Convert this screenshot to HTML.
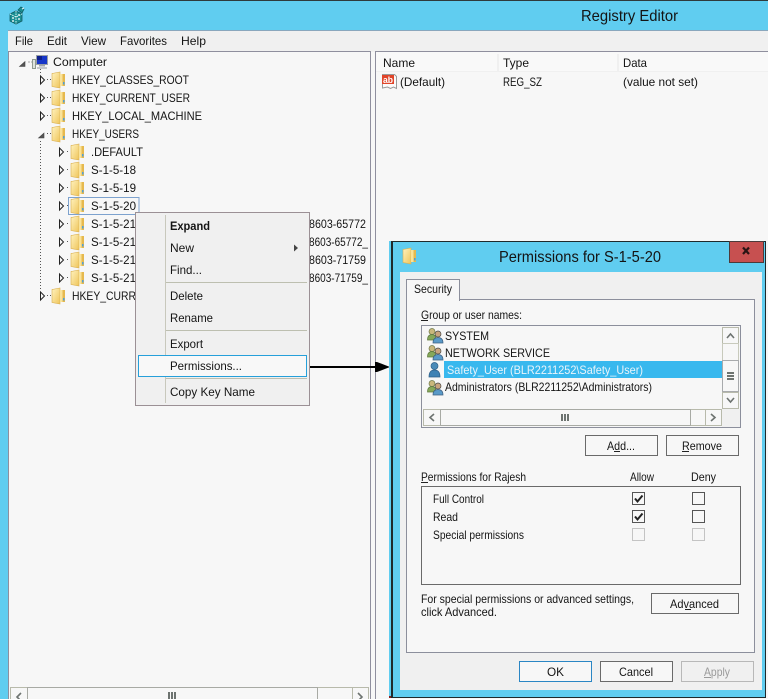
<!DOCTYPE html>
<html><head><meta charset="utf-8"><title>Registry Editor</title>
<style>
html,body{margin:0;padding:0;background:#f7f7f7;overflow:hidden}
svg{display:block}
text{font-family:"Liberation Sans",sans-serif;font-size:12px;fill:#141414}
.c{shape-rendering:crispEdges}
.ar{fill:none;stroke:#6d7370;stroke-width:1.6}
</style></head><body>
<svg width="768" height="699" viewBox="0 0 768 699" xmlns="http://www.w3.org/2000/svg">
<defs>
<linearGradient id="fg" x1="0" y1="0" x2="1" y2="1"><stop offset="0" stop-color="#fff3c0"/><stop offset="1" stop-color="#efc55a"/></linearGradient>
<symbol id="f" width="14" height="16" viewBox="0 0 14 16" overflow="visible">
<path d="M0 1h7l1 1h5v12H0z" fill="#dcae42"/>
<path d="M0 1.500L8 0v16l-8-1.500z" fill="url(#fg)" stroke="#d8ae50" stroke-width=".6"/>
<rect x="8" y="2" width="2.500" height="12" fill="#f9e39a"/>
<rect x="10.500" y="2" width="2.500" height="12" fill="#e6b94e"/>
<rect x="11" y="10" width="1.500" height="2.500" fill="#4f9fd8"/>
</symbol>
<symbol id="u2" width="17" height="16" viewBox="0 0 17 16" overflow="visible">
<circle cx="5" cy="3.500" r="3" fill="#c9b77c" stroke="#6f7a4a" stroke-width=".7"/>
<path d="M0.500 12c0-4 2-5.500 4.500-5.500S9 8 9 12z" fill="#86a85a" stroke="#5e7a3e" stroke-width=".7"/>
<circle cx="11" cy="6" r="3" fill="#c8a47e" stroke="#4a4a48" stroke-width=".7"/>
<path d="M6 15c0-4 2-5.500 5-5.500s5 1.500 5 5.500z" fill="#5a9ac8" stroke="#3e5f80" stroke-width=".7"/>
</symbol>
<symbol id="ex" width="6" height="12" viewBox="0 0 6 12" overflow="visible">
<path d="M1.500 2l4 4-4 4z" fill="#f7f7f7" stroke="#222" stroke-width="1"/>
</symbol>
<symbol id="ck" width="14" height="14" viewBox="0 0 14 14">
<rect x=".5" y=".5" width="12" height="12" fill="#f7f7f7" stroke="#555" class="c"/>
</symbol>
</defs>

<!-- chrome -->
<rect width="768" height="699" fill="#60cdf0" class="c"/>
<rect width="768" height="1" fill="#2f3a3c" class="c"/>
<rect x="8" y="30" width="760" height="1" fill="#8aa7bd" class="c"/>
<rect x="8" y="31" width="760" height="668" fill="#f0f0f0" class="c"/>

<!-- regedit icon -->
<g>
<path d="M10 14l6-3 6 3v7l-6 3-6-3z" fill="#1b8f93" stroke="#0f5d63" stroke-width=".8"/>
<path d="M16 11v13M10 14l6 3 6-3" stroke="#d6f3f2" stroke-width="1" fill="none" stroke-dasharray="1.500 1"/>
<path d="M12 18h2M18 19h2M12 21h2M18 15h2" stroke="#fff" stroke-width="1.300"/>
<path d="M18 10l3-3 3 2-2 4z" fill="#1b8f93" stroke="#0f5d63" stroke-width=".8"/>
<path d="M22 9l2-1" stroke="#eafafa"/>
</g>
<text x="581" y="21" style="font-size:16px" lengthAdjust="spacingAndGlyphs" textLength="97">Registry Editor</text>

<!-- menu -->
<text x="15" y="45" lengthAdjust="spacingAndGlyphs" textLength="18">File</text>
<text x="47" y="45" lengthAdjust="spacingAndGlyphs" textLength="20">Edit</text>
<text x="81" y="45" lengthAdjust="spacingAndGlyphs" textLength="25">View</text>
<text x="120" y="45" lengthAdjust="spacingAndGlyphs" textLength="47">Favorites</text>
<text x="181" y="45" lengthAdjust="spacingAndGlyphs" textLength="25">Help</text>

<!-- panes -->
<rect x="8.500" y="51.500" width="362" height="660" fill="#f7f7f7" stroke="#8f8f9e" class="c"/>
<rect x="375.500" y="51.500" width="400" height="660" fill="#f7f7f7" stroke="#8f8f9e" class="c"/>
<rect x="371" y="52" width="4" height="647" fill="#f7f7f7" class="c"/>

<!-- list header -->
<rect x="376" y="52" width="392" height="19" fill="#f9f9f9" class="c"/>
<rect x="376" y="71" width="392" height="1" fill="#f0f0f0" class="c"/>
<rect x="497" y="54" width="2" height="17" fill="#f0f0f0" class="c"/>
<rect x="617" y="54" width="2" height="17" fill="#f0f0f0" class="c"/>
<text x="383" y="67" lengthAdjust="spacingAndGlyphs" textLength="32">Name</text>
<text x="503" y="67" lengthAdjust="spacingAndGlyphs" textLength="26">Type</text>
<text x="623" y="67" lengthAdjust="spacingAndGlyphs" textLength="24">Data</text>
<path d="M382.500 74.500h12l2 2v12l-3-1.500-3 1.500-3-1.500-5 1z" fill="#fbfbfb" stroke="#9a9a9a"/>
<rect x="382" y="75" width="12" height="9" fill="#e0452a" class="c"/>
<text x="383" y="83" style="font-size:9px;font-weight:bold;fill:#fff" lengthAdjust="spacingAndGlyphs" textLength="10">ab</text>
<text x="400" y="86" lengthAdjust="spacingAndGlyphs" textLength="45">(Default)</text>
<text x="503" y="86" lengthAdjust="spacingAndGlyphs" textLength="39">REG_SZ</text>
<text x="623" y="86" lengthAdjust="spacingAndGlyphs" textLength="75">(value not set)</text>

<!-- tree lines -->
<g stroke="#555" stroke-dasharray="1 2" fill="none" class="c">
<path d="M40.500 69V74M40.500 141V290"/>
<path d="M28.500 62h4M47 79.500h4M47 97.500h4M47 115.500h4M47 133.500h4M47 295.500h4"/>
<path d="M67 151.500h3M67 169.500h3M67 187.500h3M67 205.500h3M67 223.500h3M67 241.500h3M67 259.500h3M67 277.500h3"/>
</g>
<path d="M19.500 66.500l5.500-5v5z" fill="#555" stroke="#444" stroke-width=".6"/>
<path d="M38.500 138l5.500-5v5z" fill="#555" stroke="#444" stroke-width=".6"/>
<use href="#ex" x="39" y="74"/><use href="#ex" x="39" y="92"/><use href="#ex" x="39" y="110"/><use href="#ex" x="39" y="290"/>
<use href="#ex" x="58" y="146"/><use href="#ex" x="58" y="164"/><use href="#ex" x="58" y="182"/><use href="#ex" x="58" y="200"/>
<use href="#ex" x="58" y="218"/><use href="#ex" x="58" y="236"/><use href="#ex" x="58" y="254"/><use href="#ex" x="58" y="272"/>

<!-- computer icon -->
<rect x="32.500" y="59.500" width="3" height="9" fill="#dfe3df" stroke="#8f9a90" class="c"/>
<rect x="36.500" y="55.500" width="11" height="9" fill="#1636c8" stroke="#9aa0a6" class="c"/>
<rect x="37" y="56" width="5" height="4" fill="#0d1f8c" class="c"/>
<rect x="39" y="65" width="6" height="1.500" fill="#a4a8ac" class="c"/>
<rect x="37" y="67" width="10" height="2" fill="#c4c8cc" class="c"/>
<text x="53" y="66" lengthAdjust="spacingAndGlyphs" textLength="54">Computer</text>

<!-- selected box -->
<rect x="68.500" y="197.500" width="70.500" height="17" fill="#f7f7f7" stroke="#7da2ce" class="c"/>

<!-- folders -->
<use href="#f" x="52" y="72"/><use href="#f" x="52" y="90"/><use href="#f" x="52" y="108"/><use href="#f" x="52" y="126"/><use href="#f" x="52" y="288"/>
<use href="#f" x="71" y="144"/><use href="#f" x="71" y="162"/><use href="#f" x="71" y="180"/><use href="#f" x="71" y="198"/>
<use href="#f" x="71" y="216"/><use href="#f" x="71" y="234"/><use href="#f" x="71" y="252"/><use href="#f" x="71" y="270"/>

<text x="72" y="84" lengthAdjust="spacingAndGlyphs" textLength="117">HKEY_CLASSES_ROOT</text>
<text x="72" y="102" lengthAdjust="spacingAndGlyphs" textLength="118">HKEY_CURRENT_USER</text>
<text x="72" y="120" lengthAdjust="spacingAndGlyphs" textLength="130">HKEY_LOCAL_MACHINE</text>
<text x="72" y="138" lengthAdjust="spacingAndGlyphs" textLength="67">HKEY_USERS</text>
<text x="91" y="156" lengthAdjust="spacingAndGlyphs" textLength="52">.DEFAULT</text>
<text x="91" y="174" lengthAdjust="spacingAndGlyphs" textLength="45">S-1-5-18</text>
<text x="91" y="192" lengthAdjust="spacingAndGlyphs" textLength="45">S-1-5-19</text>
<text x="91" y="210" lengthAdjust="spacingAndGlyphs" textLength="45">S-1-5-20</text>
<text x="91" y="228" lengthAdjust="spacingAndGlyphs" textLength="45">S-1-5-21</text>
<text x="91" y="246" lengthAdjust="spacingAndGlyphs" textLength="45">S-1-5-21</text>
<text x="91" y="264" lengthAdjust="spacingAndGlyphs" textLength="45">S-1-5-21</text>
<text x="91" y="282" lengthAdjust="spacingAndGlyphs" textLength="45">S-1-5-21</text>
<text x="72" y="300" lengthAdjust="spacingAndGlyphs" textLength="64">HKEY_CURR</text>
<text x="309" y="228" lengthAdjust="spacingAndGlyphs" textLength="57">8603-65772</text>
<text x="309" y="246" lengthAdjust="spacingAndGlyphs" textLength="59">8603-65772_</text>
<text x="309" y="264" lengthAdjust="spacingAndGlyphs" textLength="57">8603-71759</text>
<text x="309" y="282" lengthAdjust="spacingAndGlyphs" textLength="59">8603-71759_</text>

<!-- tree h-scroll -->
<rect x="10.500" y="687.500" width="358" height="20" fill="#f7f7f7" stroke="#b8baab" class="c"/>
<rect x="10.500" y="687.500" width="17" height="20" fill="#f7f7f7" stroke="#b8baab" class="c"/>
<rect x="27.500" y="687.500" width="290" height="20" fill="#f7f7f7" stroke="#a8aaa4" class="c"/>
<rect x="352.500" y="687.500" width="16" height="20" fill="#f7f7f7" stroke="#b8baab" class="c"/>
<rect x="168" y="692" width="2" height="7" fill="#6d7370" class="c"/><rect x="171" y="692" width="2" height="7" fill="#6d7370" class="c"/><rect x="174" y="692" width="2" height="7" fill="#6d7370" class="c"/>
<polyline class="ar" points="21,693 17,697 21,701"/><polyline class="ar" points="358,693 362,697 358,701"/>

<!-- context menu -->
<rect x="135.500" y="212.500" width="174" height="193" fill="#f0f0f0" stroke="#9b9095" class="c"/>
<rect x="165" y="215" width="1" height="188" fill="#c8c8bc" class="c"/>
<rect x="166" y="282" width="141" height="1" fill="#bdbfb0" class="c"/>
<rect x="166" y="330" width="141" height="1" fill="#bdbfb0" class="c"/>
<rect x="166" y="378" width="141" height="1" fill="#bdbfb0" class="c"/>
<rect x="138.500" y="355.500" width="168" height="21" fill="#f8f8f8" stroke="#26a0da" class="c"/>
<text x="170" y="230" style="font-weight:bold" lengthAdjust="spacingAndGlyphs" textLength="40">Expand</text>
<text x="170" y="252" lengthAdjust="spacingAndGlyphs" textLength="24">New</text>
<path d="M294 244.500l4 3.500-4 3.500z" fill="#444"/>
<text x="170" y="274" lengthAdjust="spacingAndGlyphs" textLength="32">Find...</text>
<text x="170" y="300" lengthAdjust="spacingAndGlyphs" textLength="33">Delete</text>
<text x="170" y="322" lengthAdjust="spacingAndGlyphs" textLength="43">Rename</text>
<text x="170" y="348" lengthAdjust="spacingAndGlyphs" textLength="33">Export</text>
<text x="170" y="370" lengthAdjust="spacingAndGlyphs" textLength="72">Permissions...</text>
<text x="170" y="396" lengthAdjust="spacingAndGlyphs" textLength="85">Copy Key Name</text>

<!-- arrow -->
<rect x="310" y="366" width="68" height="2" fill="#000" class="c"/>
<path d="M375 362h2l13 5-13 5h-2z" fill="#000"/>

<!-- dialog -->
<rect x="389" y="241" width="377" height="457" fill="#60cdf0" class="c"/>
<rect x="391" y="241" width="2" height="457" fill="#1f2a2c" class="c"/>
<rect x="391" y="241" width="375" height="1" fill="#1f2a2c" class="c"/>
<rect x="765" y="241" width="1" height="457" fill="#1f2a2c" class="c"/>
<rect x="391" y="697" width="375" height="1" fill="#1f2a2c" class="c"/>
<rect x="389" y="696" width="2" height="2" fill="#8c2020" class="c"/>
<rect x="400" y="272" width="362" height="418" fill="#f0f0f0" class="c"/>
<rect x="729.500" y="241.500" width="34" height="21" fill="#c75050" stroke="#4d3a3a" class="c"/>
<path d="M743 247.500l6 6.500m0-6.500l-6 6.500" stroke="#2a1414" stroke-width="2.200" fill="none"/>
<use href="#f" x="403" y="248"/>
<text x="499" y="262" style="font-size:16px" lengthAdjust="spacingAndGlyphs" textLength="162">Permissions for S-1-5-20</text>

<!-- tab panel -->
<rect x="406.500" y="299.500" width="348" height="353" fill="#f7f7f7" stroke="#8c8f9c" class="c"/>
<rect x="406.500" y="279.500" width="53" height="21" fill="#f7f7f7" stroke="#8c8f9c" class="c"/>
<rect x="407" y="299" width="52" height="2" fill="#f7f7f7" class="c"/>
<text x="414" y="293" lengthAdjust="spacingAndGlyphs" textLength="38">Security</text>
<text x="421" y="319" lengthAdjust="spacingAndGlyphs" textLength="101">Group or user names:</text>
<rect x="421" y="320" width="7" height="1" fill="#222" class="c"/>

<!-- list -->
<rect x="421.500" y="325.500" width="319" height="102" fill="#f7f7f7" stroke="#8c8f9c" class="c"/>
<rect x="444" y="361" width="278" height="17" fill="#38b8ee" class="c"/>
<use href="#u2" x="427" y="328"/><use href="#u2" x="427" y="345"/><use href="#u2" x="427" y="380"/>
<circle cx="434.500" cy="366" r="3.500" fill="#4a8ab8" stroke="#2f5f88" stroke-width=".7"/>
<path d="M429 377c0-5 2-7 5.500-7s5.500 2 5.500 7z" fill="#3f82b4" stroke="#2f5f88" stroke-width=".7"/>
<text x="445" y="340" lengthAdjust="spacingAndGlyphs" textLength="44">SYSTEM</text>
<text x="445" y="357" lengthAdjust="spacingAndGlyphs" textLength="105">NETWORK SERVICE</text>
<text x="447" y="374" style="fill:#e8f4fb" lengthAdjust="spacingAndGlyphs" textLength="196">Safety_User (BLR2211252\Safety_User)</text>
<text x="445" y="391" lengthAdjust="spacingAndGlyphs" textLength="207">Administrators (BLR2211252\Administrators)</text>

<!-- list v-scroll -->
<rect x="722" y="327" width="17" height="82" fill="#f7f7f7" class="c"/>
<rect x="722.500" y="327.500" width="16" height="16" fill="#f7f7f7" stroke="#b8baab" class="c"/>
<rect x="722.500" y="343.500" width="16" height="17" fill="#f7f7f7" stroke="#c8cabc" class="c"/>
<rect x="722.500" y="360.500" width="16" height="31" fill="#f7f7f7" stroke="#a8aaac" class="c"/>
<rect x="722.500" y="392.500" width="16" height="16" fill="#f7f7f7" stroke="#b8baab" class="c"/>
<polyline class="ar" points="727,338 730.500,334 734,338"/>
<polyline class="ar" points="727,398 730.500,402 734,398"/>
<rect x="727" y="372" width="7" height="2" fill="#6d7370" class="c"/><rect x="727" y="375" width="7" height="2" fill="#6d7370" class="c"/><rect x="727" y="378" width="7" height="2" fill="#6d7370" class="c"/>

<!-- list h-scroll -->
<rect x="423.500" y="409.500" width="298" height="16" fill="#f7f7f7" stroke="#b8baab" class="c"/>
<rect x="423.500" y="409.500" width="17" height="16" fill="#f7f7f7" stroke="#b8baab" class="c"/>
<rect x="440.500" y="409.500" width="250" height="16" fill="#f7f7f7" stroke="#a8aaa4" class="c"/>
<rect x="705.500" y="409.500" width="16" height="16" fill="#f7f7f7" stroke="#b8baab" class="c"/>
<rect x="722" y="409" width="18" height="18" fill="#f0f0f0" class="c"/>
<polyline class="ar" points="434,414 430,417.500 434,421"/>
<polyline class="ar" points="711,414 715,417.500 711,421"/>
<rect x="561" y="414" width="2" height="7" fill="#6d7370" class="c"/><rect x="564" y="414" width="2" height="7" fill="#6d7370" class="c"/><rect x="567" y="414" width="2" height="7" fill="#6d7370" class="c"/>

<!-- buttons -->
<rect x="585.500" y="435.500" width="72" height="20" fill="#f7f7f7" stroke="#6a6a6a" class="c"/>
<text x="607" y="450" lengthAdjust="spacingAndGlyphs" textLength="28">Add...</text>
<rect x="614" y="451" width="6" height="1" fill="#222" class="c"/>
<rect x="666.500" y="435.500" width="72" height="20" fill="#f7f7f7" stroke="#6a6a6a" class="c"/>
<text x="682" y="450" lengthAdjust="spacingAndGlyphs" textLength="40">Remove</text>
<rect x="682" y="451" width="7" height="1" fill="#222" class="c"/>

<text x="421" y="481" lengthAdjust="spacingAndGlyphs" textLength="105">Permissions for Rajesh</text>
<rect x="421" y="482" width="7" height="1" fill="#222" class="c"/>
<text x="630" y="481" lengthAdjust="spacingAndGlyphs" textLength="24">Allow</text>
<text x="691" y="481" lengthAdjust="spacingAndGlyphs" textLength="25">Deny</text>

<rect x="421.500" y="486.500" width="319" height="98" fill="#f7f7f7" stroke="#6a6a6a" class="c"/>
<text x="433" y="503" lengthAdjust="spacingAndGlyphs" textLength="51">Full Control</text>
<text x="433" y="521" lengthAdjust="spacingAndGlyphs" textLength="25">Read</text>
<text x="433" y="539" lengthAdjust="spacingAndGlyphs" textLength="91">Special permissions</text>
<use href="#ck" x="632" y="492"/><use href="#ck" x="632" y="510"/>
<use href="#ck" x="692" y="492"/><use href="#ck" x="692" y="510"/>
<rect x="632.500" y="528.500" width="12" height="12" fill="#f7f7f7" stroke="#c4c4c4" class="c"/>
<rect x="692.500" y="528.500" width="12" height="12" fill="#f7f7f7" stroke="#c4c4c4" class="c"/>
<path d="M635 498.500l2.500 3 5-6" stroke="#222" stroke-width="2" fill="none"/>
<path d="M635 516.500l2.500 3 5-6" stroke="#222" stroke-width="2" fill="none"/>

<text x="421" y="603" lengthAdjust="spacingAndGlyphs" textLength="213">For special permissions or advanced settings,</text>
<text x="421" y="616" lengthAdjust="spacingAndGlyphs" textLength="76">click Advanced.</text>
<rect x="651.500" y="593.500" width="87" height="20" fill="#f7f7f7" stroke="#6a6a6a" class="c"/>
<text x="670" y="608" lengthAdjust="spacingAndGlyphs" textLength="49">Advanced</text>
<rect x="685" y="609" width="6" height="1" fill="#222" class="c"/>

<!-- bottom buttons -->
<rect x="519.500" y="661.500" width="72" height="20" fill="#f7f7f7" stroke="#2a86c4" class="c"/>
<text x="547" y="676" lengthAdjust="spacingAndGlyphs" textLength="17">OK</text>
<rect x="600.500" y="661.500" width="72" height="20" fill="#f7f7f7" stroke="#6a6a6a" class="c"/>
<text x="619" y="676" lengthAdjust="spacingAndGlyphs" textLength="34">Cancel</text>
<rect x="681.500" y="661.500" width="72" height="20" fill="#f0f0f0" stroke="#b8b8b8" class="c"/>
<text x="704" y="676" style="fill:#9a9a9a" lengthAdjust="spacingAndGlyphs" textLength="26">Apply</text>
<rect x="704" y="677" width="7" height="1" fill="#9a9a9a" class="c"/>
</svg>
</body></html>
